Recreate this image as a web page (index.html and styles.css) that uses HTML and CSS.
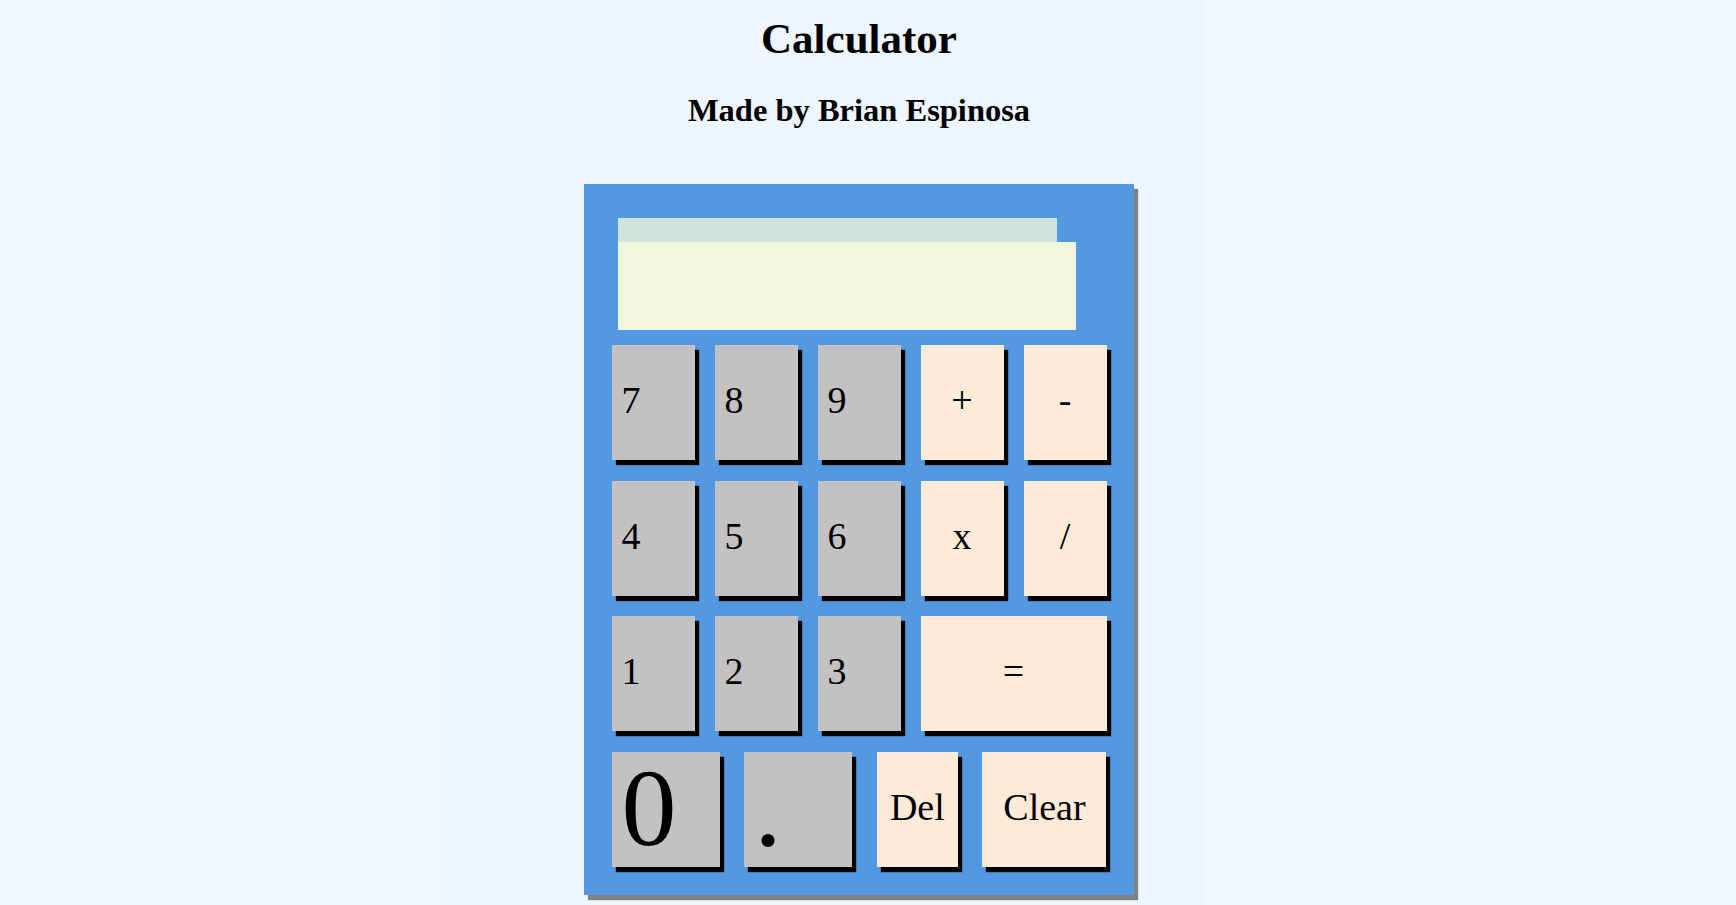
FILE: index.html
```html
<!DOCTYPE html>
<html lang="en">
<head>
<meta charset="utf-8">
<title>Calculator</title>
<link rel="stylesheet" href="styles.css">
</head>
<body>
<div class="page">
  <h1 class="title">Calculator</h1>
  <h2 class="subtitle">Made by Brian Espinosa</h2>
  <div class="calc">
    <div class="display">
      <div class="display-prev"></div>
      <div class="display-cur"></div>
    </div>
    <div class="keys">
      <button class="key num">7</button>
      <button class="key num">8</button>
      <button class="key num">9</button>
      <button class="key op">+</button>
      <button class="key op">-</button>
      <button class="key num">4</button>
      <button class="key num">5</button>
      <button class="key num">6</button>
      <button class="key op">x</button>
      <button class="key op">/</button>
      <button class="key num">1</button>
      <button class="key num">2</button>
      <button class="key num">3</button>
      <button class="key op equals">=</button>
      <div class="bottom-row">
        <button class="key num big">0</button>
        <button class="key num big">.</button>
        <button class="key op del">Del</button>
        <button class="key op clear">Clear</button>
      </div>
    </div>
  </div>
</div>
</body>
</html>
```

FILE: styles.css
```css
html, body {
  margin: 0;
  padding: 0;
}

body {
  min-height: 905px;
  background: linear-gradient(to right,
    #eff8fe 0, #eff8fe 442px,
    #edf5fe 442px, #edf5fe 1203px,
    #eff8fe 1203px, #eff8fe 100%);
  font-family: "Liberation Serif", "Times New Roman", serif;
  color: #000;
}

.page {
  width: 1718px;
  padding-top: 15px;
  text-align: center;
}

.title {
  margin: 0;
  font-size: 43px;
  line-height: 48px;
  font-weight: bold;
}

.subtitle {
  margin: 29px 0 0;
  font-size: 32.5px;
  line-height: 36px;
  font-weight: bold;
}

.calc {
  width: 550px;
  box-sizing: border-box;
  margin: 56px auto 0;
  padding: 34px 28px 28px 27.5px;
  background: #5299e2;
  box-shadow: 4px 5px 1px #808080;
  text-align: left;
}

.display {
  margin-left: 6px;
}

.display-prev {
  width: 439px;
  height: 24px;
  background: #d0e4de;
}

.display-cur {
  width: 458px;
  height: 88px;
  background: #f1f7dc;
}

.keys {
  margin-top: 15px;
  display: grid;
  grid-template-columns: repeat(5, 83px);
  grid-auto-rows: 115px;
  column-gap: 20px;
  row-gap: 20.5px;
}

.key {
  margin: 0;
  border: none;
  border-radius: 0;
  height: 115px;
  font-family: "Liberation Serif", "Times New Roman", serif;
  font-size: 38px;
  color: #000;
  box-shadow: 4px 5px 1px #000;
  overflow: visible;
  cursor: pointer;
}

.num {
  background: #c3c1c2;
  text-align: left;
  padding: 0 0 5px 10px;
}

.op {
  background: #fdebd7;
  text-align: center;
  padding: 0 0 5px 0;
}

.equals {
  grid-column: span 2;
}

.bottom-row {
  grid-column: 1 / -1;
  display: flex;
  justify-content: space-between;
}

.big {
  width: 108px;
  font-size: 110px;
  line-height: 1;
  padding-bottom: 2px;
}

.del {
  width: 81px;
}

.clear {
  width: 124px;
}
```
